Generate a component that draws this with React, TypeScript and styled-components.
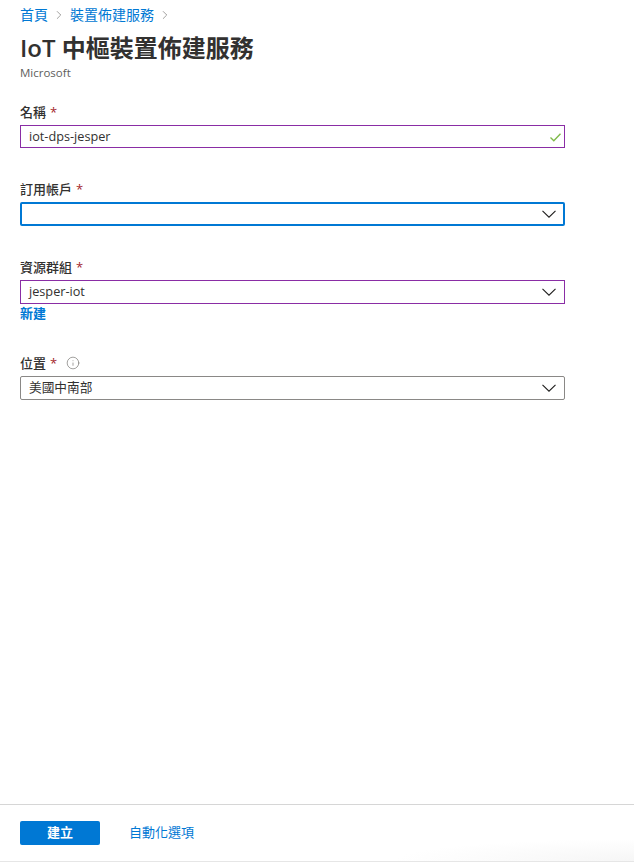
import styled, { createGlobalStyle } from 'styled-components';
import { ChevronRight, Info } from 'lucide-react';

const GlobalStyle = createGlobalStyle`
  html, body {
    margin: 0;
    padding: 0;
    background: #fff;
  }
  body {
    font-family: "Open Sans", "Noto Sans CJK TC", sans-serif;
    color: #323130;
  }
`;

const App = () => {
  return (
    <Page>
      <GlobalStyle />
      <Main>
        <Breadcrumb>
          <Crumb>首頁</Crumb>
          <ChevronRight size={14} strokeWidth={1} color="#605e5c" />
          <Crumb>裝置佈建服務</Crumb>
          <ChevronRight size={14} strokeWidth={1} color="#605e5c" />
        </Breadcrumb>
        <Title>IoT 中樞裝置佈建服務</Title>
        <Publisher>Microsoft</Publisher>

        <Field>
          <Label>名稱 <Star>*</Star></Label>
          <Control $border="valid" $height={23}>
            <Value>iot-dps-jesper</Value>
            <CheckMark />
          </Control>
        </Field>

        <Field>
          <Label>訂用帳戶 <Star>*</Star></Label>
          <Control $border="focus">
            <Value />
            <Arrow />
          </Control>
        </Field>

        <Field>
          <Label>資源群組 <Star>*</Star></Label>
          <Control $border="valid">
            <Value>jesper-iot</Value>
            <Arrow />
          </Control>
          <NewLink>新建</NewLink>
        </Field>

        <Field>
          <Label>
            位置 <Star>*</Star>
            <InfoIcon>
              <Info size={14} strokeWidth={1} color="#605e5c" />
            </InfoIcon>
          </Label>
          <Control>
            <Value>美國中南部</Value>
            <Arrow />
          </Control>
        </Field>
      </Main>

      <Footer>
        <CreateButton>建立</CreateButton>
        <FooterLink>自動化選項</FooterLink>
      </Footer>
    </Page>
  );
};

export default App;

const Arrow = () => (
  <ArrowSvg width="14" height="8" viewBox="0 0 14 8">
    <path d="M0.5 0.8 L7 7.2 L13.5 0.8" fill="none" stroke="#201f1e" strokeWidth="1.1" />
  </ArrowSvg>
);

const CheckMark = () => (
  <CheckSvg width="11" height="9" viewBox="0 0 11 9">
    <path d="M0.5 4.6 L3.8 7.8 L10.5 0.8" fill="none" stroke="#7fba4a" strokeWidth="1.4" />
  </CheckSvg>
);

const borders: Record<string, string> = {
  valid: '1px solid #8a2da5',
  focus: '2px solid #0078d4',
  normal: '1px solid #8a8886',
};

const Page = styled.div`
  height: 100vh;
  display: flex;
  flex-direction: column;
  box-sizing: border-box;
  border-bottom: 1px solid #e6e6e6;
`;

const Main = styled.div`
  flex: 1;
  padding: 6px 69px 0 20px;
`;

const Breadcrumb = styled.div`
  display: flex;
  align-items: center;
  gap: 4px;
  height: 18px;
`;

const Crumb = styled.a`
  font-size: 14px;
  line-height: 18px;
  color: #0078d4;
`;

const Title = styled.h1`
  margin: 8px 0 0;
  font-size: 24px;
  line-height: 32px;
  font-weight: 600;
  color: #323130;
`;

const Publisher = styled.div`
  font-size: 11.5px;
  line-height: 14px;
  margin-top: 2px;
  margin-bottom: 23px;
  color: #605e5c;
`;

const Field = styled.div`
  margin-bottom: 32px;
`;

const Label = styled.div`
  display: flex;
  align-items: center;
  gap: 4px;
  font-size: 13px;
  line-height: 18px;
  height: 18px;
  margin-bottom: 4px;
  color: #323130;
  font-weight: 500;
`;

const Star = styled.span`
  color: #a4262c;
  margin-right: 2px;
`;

const InfoIcon = styled.span`
  display: flex;
  margin-left: 3px;
`;

const Control = styled.div<{ $border?: string; $height?: number }>`
  height: ${(p) => p.$height ?? 24}px;
  box-sizing: border-box;
  border: ${(p) => borders[p.$border ?? 'normal']};
  border-radius: ${(p) => (p.$border === 'valid' ? '0' : '2px')};
  display: flex;
  align-items: center;
  justify-content: space-between;
  padding: 0 ${(p) => (p.$border === 'focus' ? '7px' : '8px')} 0 8px;
`;

const ArrowSvg = styled.svg`
  flex: none;
`;

const CheckSvg = styled.svg`
  flex: none;
  margin-right: -5px;
  margin-top: 2px;
`;

const Value = styled.span`
  font-size: 12.7px;
  line-height: 18px;
  padding-bottom: 2px;
  color: #323130;
`;

const NewLink = styled.a`
  display: block;
  font-size: 13px;
  line-height: 18px;
  font-weight: 700;
  color: #0078d4;
`;

const Footer = styled.div`
  height: 57px;
  box-sizing: border-box;
  border-top: 1px solid #d6d6d6;
  display: flex;
  align-items: center;
  gap: 29px;
  padding: 0 20px;
  background: radial-gradient(ellipse 240px 22px at 100% 100%, #f6f6f6, #ffffff);
`;

const CreateButton = styled.button`
  width: 80px;
  height: 24px;
  border: none;
  border-radius: 2px;
  background: #0078d4;
  color: #fff;
  font-family: inherit;
  font-size: 13px;
  font-weight: 700;
  padding: 0 0 4px;
`;

const FooterLink = styled.a`
  font-size: 13px;
  color: #0078d4;
  padding-bottom: 3px;
`;
